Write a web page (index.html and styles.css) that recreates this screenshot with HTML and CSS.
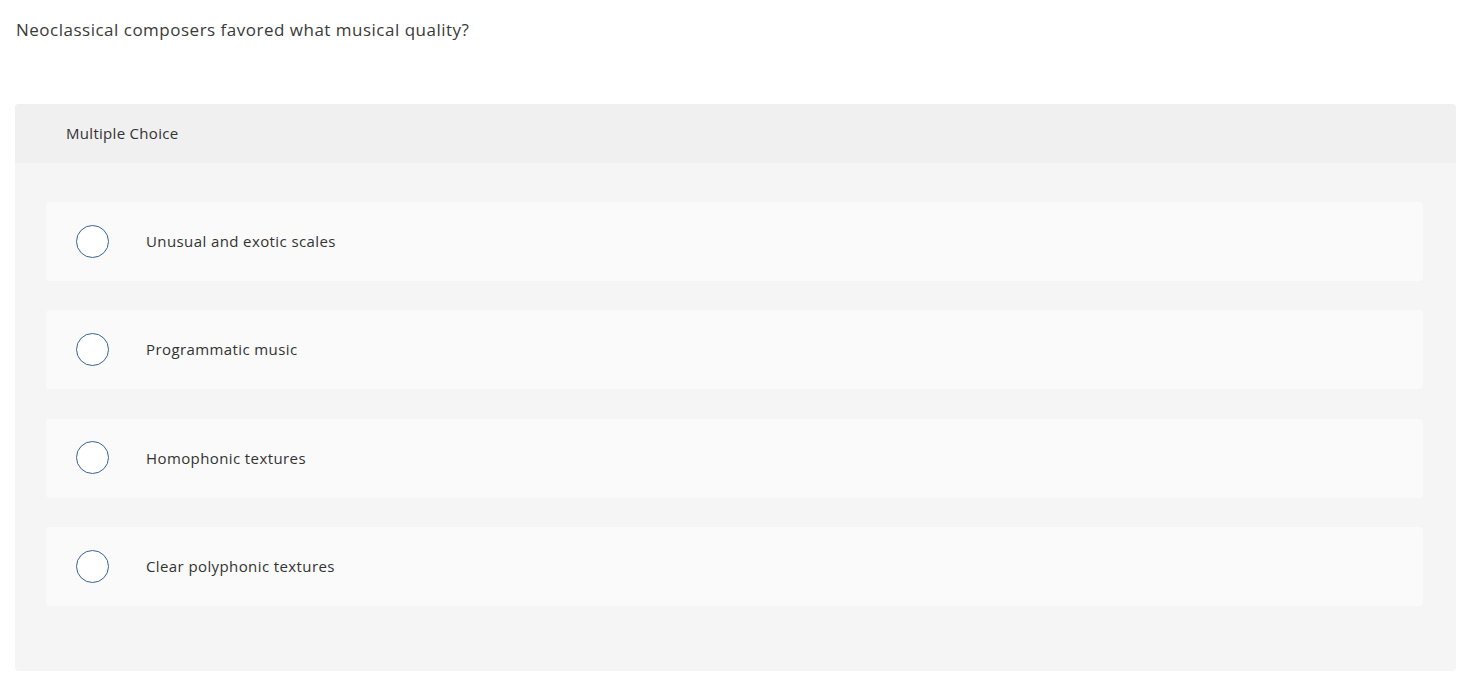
FILE: index.html
```html
<!DOCTYPE html>
<html>
<head>
<meta charset="utf-8">
<link rel="stylesheet" href="styles.css">
</head>
<body>
<div class="page">
  <p class="question">Neoclassical composers favored what musical quality?</p>
  <div class="card">
    <div class="card-header">Multiple Choice</div>
    <div class="card-body">
      <div class="option"><span class="radio"></span><span class="label">Unusual and exotic scales</span></div>
      <div class="option"><span class="radio"></span><span class="label">Programmatic music</span></div>
      <div class="option"><span class="radio"></span><span class="label">Homophonic textures</span></div>
      <div class="option"><span class="radio"></span><span class="label">Clear polyphonic textures</span></div>
    </div>
  </div>
</div>
</body>
</html>
```

FILE: styles.css
```css
html, body {
  margin: 0;
  padding: 0;
  background: #ffffff;
}
body {
  font-family: "Open Sans", "Lato", sans-serif;
  color: #333333;
}
.page {
  padding: 18px 7px 0 15px;
}
.question {
  margin: 0 0 0 1px;
  font-size: 17px;
  letter-spacing: 0.5px;
  line-height: 24px;
  color: #3a3a3a;
  height: 86px;
}
.card {
  border-radius: 4px;
  overflow: hidden;
  background: #f5f5f5;
}
.card-header {
  background: #f0f0f0;
  height: 59px;
  display: flex;
  align-items: center;
  padding-left: 51px;
  padding-bottom: 1px;
  box-sizing: border-box;
  font-size: 15px;
  letter-spacing: 0.3px;
  color: #333333;
}
.card-body {
  padding: 39px 33px 65px 31px;
  display: flex;
  flex-direction: column;
  gap: 29.4px;
}
.option {
  background: #fafafa;
  border-radius: 4px;
  height: 79px;
  display: flex;
  align-items: center;
  padding-left: 30px;
  padding-bottom: 1px;
  box-sizing: border-box;
}
.radio {
  width: 31px;
  height: 31px;
  border: 1.5px solid #36639a;
  border-radius: 50%;
  background: #ffffff;
  flex: none;
}
.label {
  margin-left: 37px;
  font-size: 15px;
  letter-spacing: 0.4px;
  color: #333333;
}
```
